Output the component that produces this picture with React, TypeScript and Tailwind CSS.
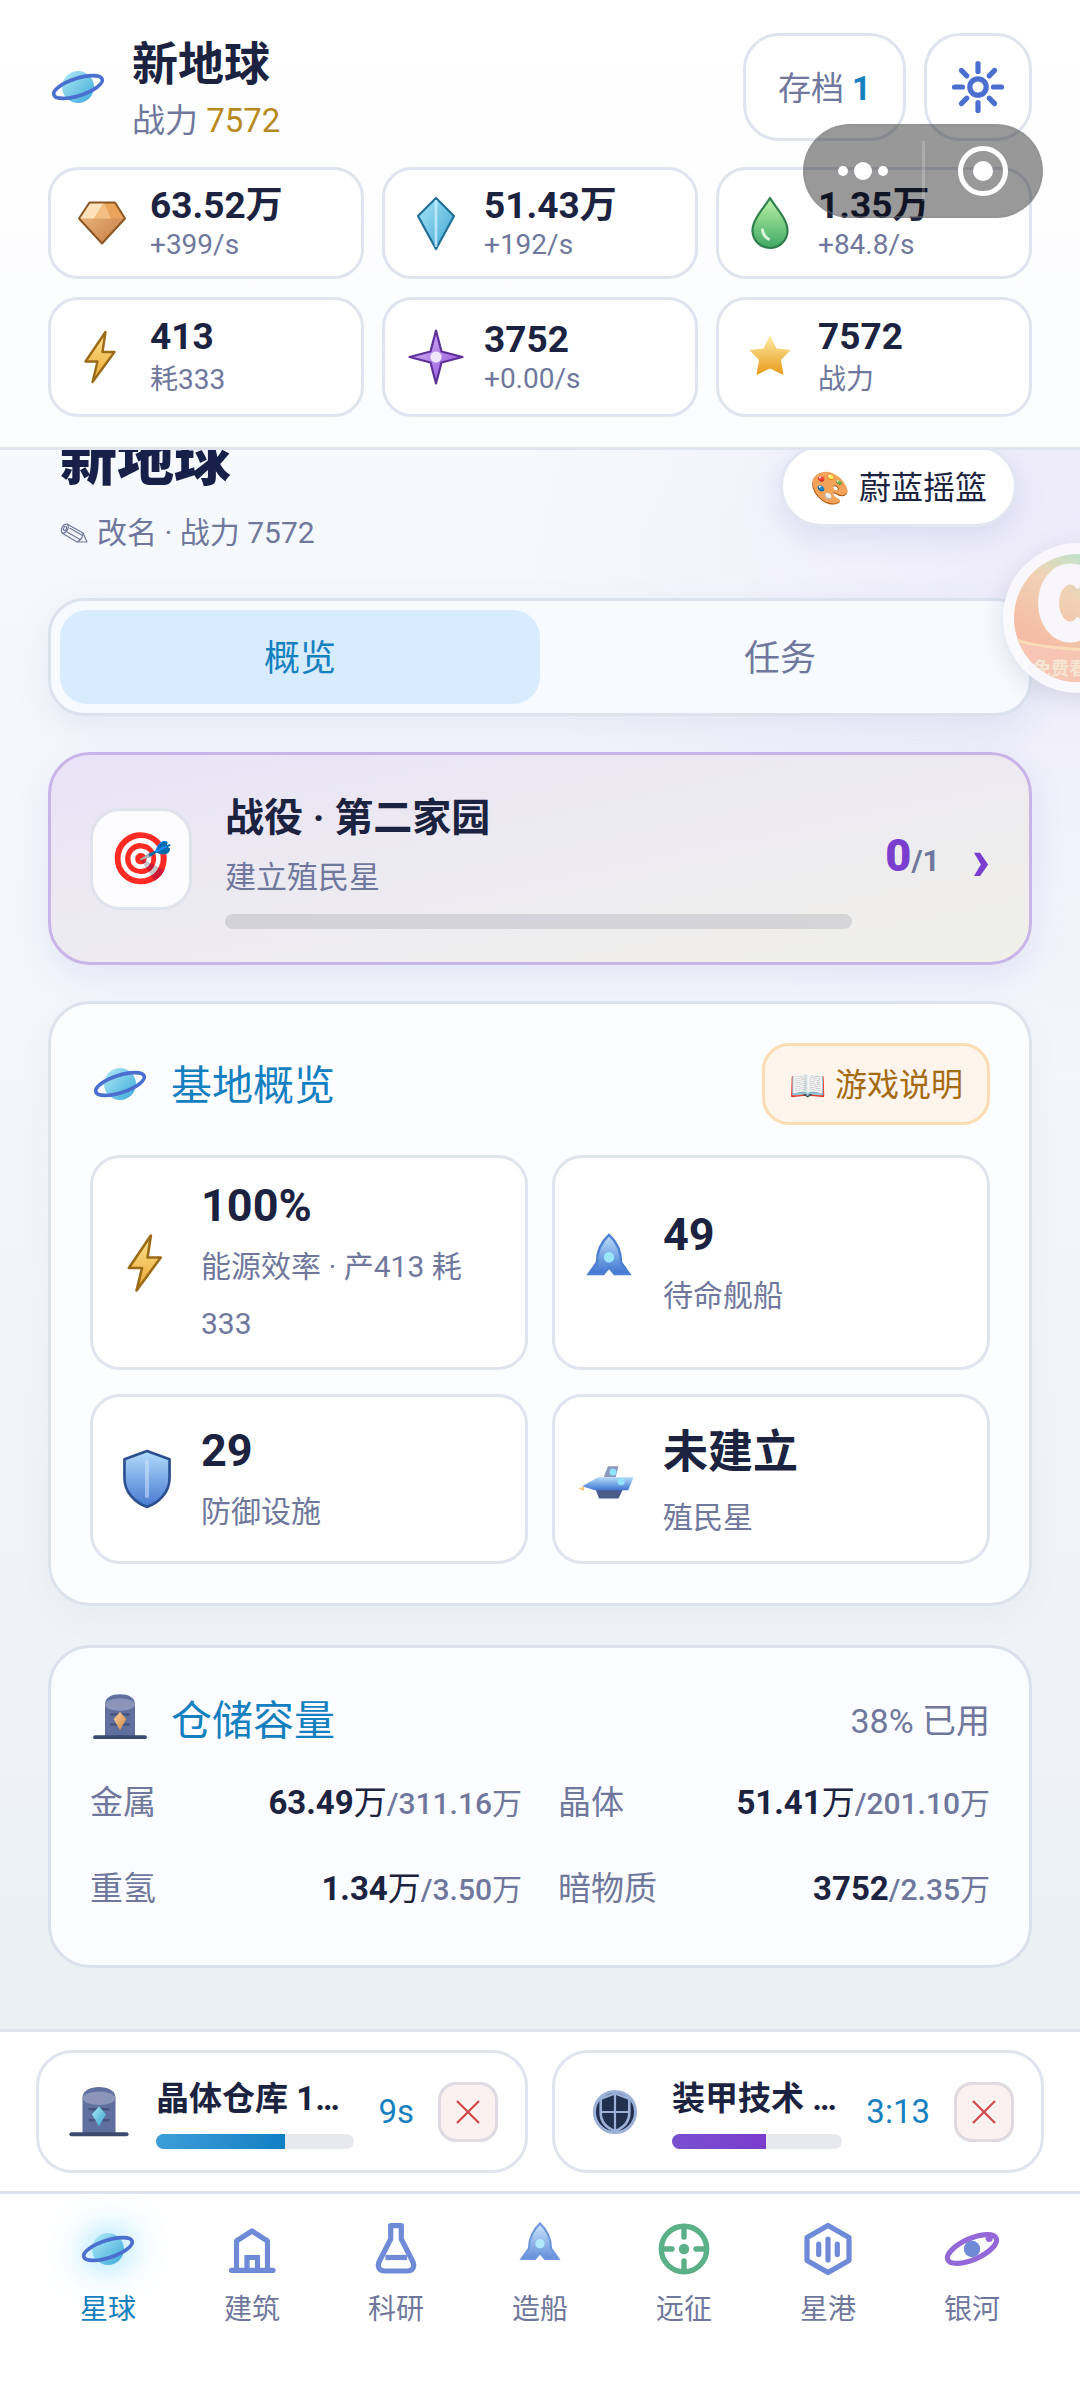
import { useState } from 'react'
import type { ReactNode } from 'react'
import clsx from 'clsx'

interface IconProps {
  className?: string
}

interface Resource {
  icon: ReactNode
  value: string
  note: string
  tall?: boolean
}

interface QueueJob {
  id: string
  icon: ReactNode
  name: string
  remaining: string
  progress: number
  barClass: string
}

// All icons share a 60 unit box
function PlanetIcon({ className }: IconProps) {
  return (
    <svg viewBox="0 0 60 60" className={className} fill="none" aria-hidden="true">
      <defs>
        <linearGradient id="planet" x1="0" y1="0" x2="1" y2="1">
          <stop offset="0" stopColor="#b4ebf6" />
          <stop offset="1" stopColor="#3aa9da" />
        </linearGradient>
      </defs>
      <circle cx="30" cy="30" r="16" fill="url(#planet)" />
      <ellipse cx="30" cy="30" rx="25.4" ry="8.6" stroke="#4a6fcf" strokeWidth="3.6" transform="rotate(-18 30 30)" />
    </svg>
  )
}

function MetalIcon({ className }: IconProps) {
  return (
    <svg viewBox="0 0 60 60" className={className} aria-hidden="true">
      <defs>
        <linearGradient id="metal" x1="0" y1="0" x2="1" y2="1">
          <stop offset="0" stopColor="#f5c08a" />
          <stop offset="1" stopColor="#c47a42" />
        </linearGradient>
      </defs>
      <path d="M17.5 9.5H43L53 25.5L30 50.5L7 25.5Z" fill="url(#metal)" />
      <path d="M17.5 9.5H43L53 25.5H7Z" fill="#eaa45c" />
      <path d="M17.5 9.5H32L22 25.5H7Z" fill="#fde2bb" />
      <path d="M32 9.5L22 25.5H39Z" fill="#f3bf85" />
      <path d="M17.5 9.5H43L53 25.5L30 50.5L7 25.5Z" fill="none" stroke="#8c5622" strokeWidth="2" strokeLinejoin="round" />
    </svg>
  )
}

function CrystalIcon({ className }: IconProps) {
  return (
    <svg viewBox="0 0 60 60" className={className} aria-hidden="true">
      <defs>
        <linearGradient id="crystal" x1="0" y1="0" x2="1" y2="1">
          <stop offset="0" stopColor="#a9e6f8" />
          <stop offset="1" stopColor="#3fa5d3" />
        </linearGradient>
      </defs>
      <path d="M30 5L48 23L30 56L12 23Z" fill="url(#crystal)" stroke="#1f7096" strokeWidth="2.2" strokeLinejoin="round" />
      <path d="M30 7V54" stroke="#d8f4fd" strokeWidth="2.6" opacity="0.7" />
    </svg>
  )
}

function DropIcon({ className }: IconProps) {
  return (
    <svg viewBox="0 0 60 60" className={className} aria-hidden="true">
      <defs>
        <linearGradient id="drop" x1="0" y1="0" x2="0" y2="1">
          <stop offset="0" stopColor="#bff3a8" />
          <stop offset="1" stopColor="#3fa964" />
        </linearGradient>
      </defs>
      <path
        d="M30 5C36 15 47.5 26 47.5 37.5A17.5 17.5 0 0 1 12.5 37.5C12.5 26 24 15 30 5Z"
        fill="url(#drop)"
        stroke="#2f7f4c"
        strokeWidth="2.2"
        strokeLinejoin="round"
      />
      <path d="M22.5 37C23 42 25.5 44.5 28.5 46" fill="none" stroke="#dcf8dc" strokeWidth="3" strokeLinecap="round" />
    </svg>
  )
}

function BoltIcon({ className }: IconProps) {
  return (
    <svg viewBox="0 0 60 60" className={className} aria-hidden="true">
      <defs>
        <linearGradient id="bolt" x1="0" y1="0" x2="0" y2="1">
          <stop offset="0" stopColor="#fbe596" />
          <stop offset="1" stopColor="#eda62d" />
        </linearGradient>
      </defs>
      <path
        d="M33.5 5L13.5 34.5H25.5L20.5 55L42.5 25H30.5Z"
        fill="url(#bolt)"
        stroke="#9c6b18"
        strokeWidth="2.4"
        strokeLinejoin="round"
      />
    </svg>
  )
}

function DarkMatterIcon({ className }: IconProps) {
  return (
    <svg viewBox="0 0 60 60" className={className} aria-hidden="true">
      <defs>
        <linearGradient id="dark" x1="0" y1="0" x2="1" y2="1">
          <stop offset="0" stopColor="#dcc0f8" />
          <stop offset="1" stopColor="#8a48d8" />
        </linearGradient>
      </defs>
      <path
        d="M30 3.5L35.5 24.5L56.5 30L35.5 35.5L30 56.5L24.5 35.5L3.5 30L24.5 24.5Z"
        fill="url(#dark)"
        stroke="#5d3198"
        strokeWidth="2.2"
        strokeLinejoin="round"
      />
      <circle cx="30" cy="30" r="5.6" fill="#f1e6fb" />
    </svg>
  )
}

function StarIcon({ className }: IconProps) {
  return (
    <svg viewBox="0 0 60 60" className={className} aria-hidden="true">
      <defs>
        <linearGradient id="star" x1="0" y1="0" x2="0" y2="1">
          <stop offset="0" stopColor="#fdeea6" />
          <stop offset="1" stopColor="#e89a1c" />
        </linearGradient>
      </defs>
      <path d="M30 8L36.5 21.5L50.7 23L41 33L43.5 48L30 41.5L16.5 48L19 33L9.3 23L23.5 21.5Z" fill="url(#star)" />
    </svg>
  )
}

function SettingsIcon({ className }: IconProps) {
  return (
    <svg viewBox="0 0 60 60" className={className} fill="none" stroke="#4a6fcf" strokeWidth="5.2" strokeLinecap="round" aria-hidden="true">
      <circle cx="30" cy="30" r="8.2" />
      <path d="M30 6.5V14.5M30 45.5V53.5M6.5 30H14.5M45.5 30H53.5M13.4 13.4L18.8 18.8M41.2 41.2L46.6 46.6M46.6 13.4L41.2 18.8M18.8 41.2L13.4 46.6" />
    </svg>
  )
}

function ShieldIcon({ className }: IconProps) {
  return (
    <svg viewBox="0 0 60 60" className={className} aria-hidden="true">
      <defs>
        <linearGradient id="shield" x1="0" y1="0" x2="0" y2="1">
          <stop offset="0" stopColor="#b3dcfb" />
          <stop offset="1" stopColor="#4678d2" />
        </linearGradient>
      </defs>
      <path
        d="M30 4.5L50.5 12V29C50.5 42 41 51.5 30 55.5C19 51.5 9.5 42 9.5 29V12Z"
        fill="url(#shield)"
        stroke="#2c4f8f"
        strokeWidth="2.4"
        strokeLinejoin="round"
      />
      <path d="M30 13V47" stroke="#d5e8fc" strokeWidth="3.6" opacity="0.5" />
    </svg>
  )
}

function RocketIcon({ className }: IconProps) {
  return (
    <svg viewBox="0 0 60 60" className={className} aria-hidden="true">
      <defs>
        <linearGradient id="rocket" x1="0" y1="0" x2="0" y2="1">
          <stop offset="0" stopColor="#bde0fa" />
          <stop offset="1" stopColor="#3f74d0" />
        </linearGradient>
      </defs>
      <path
        d="M30 4.5C36 10 41 19 41 29.5L48.5 40H35L30 34L25 40H11.5L19 29.5C19 19 24 10 30 4.5Z"
        fill="url(#rocket)"
        stroke="#4a7fd2"
        strokeWidth="2.2"
      />
      <circle cx="30" cy="24.8" r="4.7" fill="#9be6fb" />
    </svg>
  )
}

function ColonyShipIcon({ className }: IconProps) {
  return (
    <svg viewBox="0 0 60 60" className={className} aria-hidden="true">
      <defs>
        <linearGradient id="hull" x1="0" y1="0" x2="0" y2="1">
          <stop offset="0" stopColor="#b5dcfa" />
          <stop offset="1" stopColor="#3f74d0" />
        </linearGradient>
      </defs>
      <path d="M25.2 28.5L29 18.3H38.6L36.1 28.5Z" fill="#8d97bb" />
      <path d="M18 40H42.4L38.6 47.7H21Z" fill="#4a5b8c" />
      <path d="M5.5 36.5L20 28.3H52.4L47.4 40.2H17.4Z" fill="url(#hull)" />
      <path d="M2.3 38.7L7.3 36.9V41Z" fill="#f8c878" />
      <circle cx="33.6" cy="23.6" r="3.2" fill="#8fe3fb" />
      <circle cx="41" cy="32.3" r="3.3" fill="#8fe3fb" />
    </svg>
  )
}

function WarehouseIcon({ className, ore }: IconProps & { ore: 'metal' | 'crystal' }) {
  const id = `ore-${ore}`
  return (
    <svg viewBox="0 0 60 60" className={className} aria-hidden="true">
      <defs>
        <linearGradient id={id} x1="0" y1="0" x2="1" y2="1">
          <stop offset="0" stopColor={ore === 'metal' ? '#fbd3a0' : '#a8ecfa'} />
          <stop offset="1" stopColor={ore === 'metal' ? '#cf8440' : '#35a0c8'} />
        </linearGradient>
      </defs>
      <path d="M15 50V17C15 10.5 22 7.3 30 7.3S45 10.5 45 17V50Z" fill="#5f6f9f" />
      <ellipse cx="30" cy="17.5" rx="15" ry="6.2" fill="#8b95ba" />
      <path d="M20.5 27.5H39.5M20.5 37.5H39.5" stroke="#46547e" strokeWidth="2.4" />
      <path d="M30 25L36.4 32L30 43L23.6 32Z" fill={`url(#${id})`} />
      <path d="M5 50.2H55" stroke="#3c4a70" strokeWidth="3.8" strokeLinecap="round" />
    </svg>
  )
}

function ArmorIcon({ className }: IconProps) {
  return (
    <svg viewBox="0 0 60 60" className={className} fill="none" stroke="#9cb1d8" aria-hidden="true">
      <circle cx="30" cy="30" r="18.7" fill="#22304f" strokeWidth="2.8" />
      <path d="M30 13L43 18V31C43 39 37.5 44.5 30 47.5C22.5 44.5 17 39 17 31V18Z" strokeWidth="2.4" />
      <path d="M30 13V47M17 30H43" strokeWidth="2" />
    </svg>
  )
}

function BuildIcon({ className }: IconProps) {
  return (
    <svg viewBox="0 0 60 60" className={className} fill="none" stroke="#6f8bd8" strokeWidth="5.2" strokeLinecap="round" strokeLinejoin="round" aria-hidden="true">
      <path d="M14.5 51V22L30 12L45.5 22V51M9.5 51.3H51" />
      <path d="M25 51V38.5H35.5V51" strokeLinejoin="miter" />
    </svg>
  )
}

function FlaskIcon({ className }: IconProps) {
  return (
    <svg viewBox="0 0 60 60" className={className} fill="none" stroke="#6f8bd8" strokeWidth="5.2" strokeLinejoin="round" aria-hidden="true">
      <path d="M24.7 6.7H35.3V20L46.5 42C49.5 48 46.5 52 41.5 52H18.5C13.5 52 10.5 48 13.5 42L24.7 20Z" />
      <path d="M19.5 38.5H41" />
    </svg>
  )
}

function ExpeditionIcon({ className }: IconProps) {
  return (
    <svg viewBox="0 0 60 60" className={className} fill="none" stroke="#5cb088" strokeWidth="5.4" strokeLinecap="round" aria-hidden="true">
      <circle cx="30" cy="30" r="22.7" />
      <path d="M30 10V18M30 42V50M10 30H18M42 30H50" />
      <circle cx="30" cy="30" r="5.2" fill="#5cb088" stroke="none" />
    </svg>
  )
}

function StarportIcon({ className }: IconProps) {
  return (
    <svg viewBox="0 0 60 60" className={className} fill="none" stroke="#6f8bd8" strokeWidth="5.2" strokeLinecap="round" aria-hidden="true">
      <path d="M30 6.5L51 18.5V41.5L30 53.5L9 41.5V18.5Z" strokeLinejoin="round" />
      <path d="M20.7 25V35.5M30 20V41M39.3 25V35.5" />
    </svg>
  )
}

function GalaxyIcon({ className }: IconProps) {
  return (
    <svg viewBox="0 0 60 60" className={className} fill="none" aria-hidden="true">
      <ellipse cx="30" cy="30" rx="26.5" ry="10.5" stroke="#9468d8" strokeWidth="5.2" transform="rotate(-24 30 30)" />
      <circle cx="30" cy="30" r="8.2" fill="#6f8bd8" />
      <circle cx="47.2" cy="19.3" r="3.6" fill="#9468d8" />
    </svg>
  )
}

function PencilIcon({ className }: IconProps) {
  return (
    <svg viewBox="0 0 28 22" className={className} fill="none" stroke="currentColor" strokeWidth="1.2" strokeLinejoin="round" aria-hidden="true">
      <path d="M7 2L23 11L27 20L17 20L2 11C0 7 3 2 7 2Z" />
      <path d="M7 2C10 4 7 12 2 11M23 11C23 14 21 18 17 20M9.5 6L22.5 13.5M7 10L20 17.5" />
      <ellipse cx="5" cy="6.5" rx="1.4" ry="2.2" transform="rotate(25 5 6.5)" />
    </svg>
  )
}

const RESOURCES: Resource[] = [
  { icon: <MetalIcon className="size-[60px] shrink-0" />, value: '63.52万', note: '+399/s' },
  { icon: <CrystalIcon className="size-[60px] shrink-0" />, value: '51.43万', note: '+192/s' },
  { icon: <DropIcon className="size-[60px] shrink-0" />, value: '1.35万', note: '+84.8/s' },
  { icon: <BoltIcon className="size-[60px] shrink-0" />, value: '413', note: '耗333', tall: true },
  { icon: <DarkMatterIcon className="size-[60px] shrink-0" />, value: '3752', note: '+0.00/s' },
  { icon: <StarIcon className="size-[60px] shrink-0" />, value: '7572', note: '战力', tall: true },
]

const STATS: Resource[] = [
  { icon: <BoltIcon className="size-[66px] shrink-0" />, value: '100%', note: '能源效率 · 产413 耗333' },
  { icon: <RocketIcon className="size-[66px] shrink-0" />, value: '49', note: '待命舰船' },
  { icon: <ShieldIcon className="size-[66px] shrink-0" />, value: '29', note: '防御设施' },
  { icon: <ColonyShipIcon className="size-[66px] shrink-0" />, value: '未建立', note: '殖民星', tall: true },
]

const STORAGE = [
  { name: '金属', used: '63.49', unit: '万', cap: '311.16' },
  { name: '晶体', used: '51.41', unit: '万', cap: '201.10' },
  { name: '重氢', used: '1.34', unit: '万', cap: '3.50' },
  { name: '暗物质', used: '3752', unit: '', cap: '2.35' },
]

const JOBS: QueueJob[] = [
  {
    id: 'warehouse',
    icon: <WarehouseIcon ore="crystal" className="size-[66px] shrink-0" />,
    name: '晶体仓库 1…',
    remaining: '9s',
    progress: 65,
    barClass: 'bg-linear-to-r from-[#3d9fd8] to-[#0f7fc4]',
  },
  {
    id: 'armor',
    icon: <ArmorIcon className="size-[66px] shrink-0" />,
    name: '装甲技术 …',
    remaining: '3:13',
    progress: 55,
    barClass: 'bg-linear-to-r from-[#7a50cf] to-[#7a3ccd]',
  },
]

const NAV = [
  { label: '星球', icon: <PlanetIcon className="size-[60px] drop-shadow-[0_0_18px_rgba(90,205,255,0.9)]" /> },
  { label: '建筑', icon: <BuildIcon className="size-[60px]" /> },
  { label: '科研', icon: <FlaskIcon className="size-[60px]" /> },
  { label: '造船', icon: <RocketIcon className="size-[60px] opacity-80" /> },
  { label: '远征', icon: <ExpeditionIcon className="size-[60px]" /> },
  { label: '星港', icon: <StarportIcon className="size-[60px]" /> },
  { label: '银河', icon: <GalaxyIcon className="size-[60px]" /> },
]

function ResourceCard({ icon, value, note, tall }: Resource) {
  return (
    <div className="flex min-h-[112px] items-center gap-[18px] rounded-[30px] border-[3px] border-[#e0e4ef] bg-white px-[21px] py-3">
      {icon}
      <div className={clsx('min-w-0', tall ? 'pt-1' : 'pt-[2px]')}>
        <div className="text-[37px] leading-[42px] font-bold text-[#1b2340]">{value}</div>
        <div className={clsx('text-[28px] text-[#6f789c]', tall ? 'leading-[44px]' : 'leading-[36px]')}>{note}</div>
      </div>
    </div>
  )
}

function StatCard({ icon, value, note, tall }: Resource) {
  return (
    <div className="flex items-center gap-[21px] rounded-[30px] border-[3px] border-[#e0e4ee] bg-white px-[21px] py-[15px]">
      {icon}
      <div className="min-w-0">
        <div className={clsx('text-[45px] font-bold text-[#1b2340]', tall ? 'pt-1 leading-[73px]' : 'leading-[65px]')}>{value}</div>
        <div className="text-[30px] leading-[57px] text-[#6f789c]">{note}</div>
      </div>
    </div>
  )
}

function Header() {
  return (
    <header className="relative border-b-[3px] border-[#e0e4ef] bg-linear-to-b from-white to-[#fbfcfe] px-12 py-[30px]">
      <div className="flex items-center">
        <PlanetIcon className="size-[60px] shrink-0" />
        <div className="ml-6 flex-1">
          <div className="text-[46px] leading-[68px] font-bold text-[#1b2340]">新地球</div>
          <div className="text-[33px] leading-[46px] text-[#6f789c]">
            战力 <span className="text-[#b88a1e]">7572</span>
          </div>
        </div>
        <div className="flex gap-[18px]">
          <button className="h-[108px] rounded-[36px] border-[3px] border-[#e0e4ef] bg-white px-8 pt-1 text-[33px] text-[#6f789c]">
            存档 <span className="font-bold text-[#1580bf]">1</span>
          </button>
          <button aria-label="设置" className="flex size-[108px] items-center justify-center rounded-[36px] border-[3px] border-[#e0e4ef] bg-white">
            <SettingsIcon className="size-[60px]" />
          </button>
        </div>
      </div>
      <div className="mt-[23px] grid grid-cols-3 gap-[18px]">
        {RESOURCES.map((r) => (
          <ResourceCard key={r.note} {...r} />
        ))}
      </div>
    </header>
  )
}

// Host app capsule, floats over the header
function Capsule() {
  return (
    <div className="absolute top-[124px] right-[37px] z-20 flex h-[94px] w-[240px] items-center rounded-full border-2 border-[#8b8b8b]/40 bg-black/40">
      <button aria-label="更多" className="flex flex-1 items-center justify-center gap-[6px]">
        <span className="size-[10px] rounded-full bg-white" />
        <span className="size-[18px] rounded-full bg-white" />
        <span className="size-[10px] rounded-full bg-white" />
      </button>
      <span className="h-[60px] w-[3px] bg-white/20" />
      <button aria-label="关闭" className="flex flex-1 items-center justify-center">
        <span className="flex size-[50px] items-center justify-center rounded-full border-[5px] border-white">
          <span className="size-[20px] rounded-full bg-white" />
        </span>
      </button>
    </div>
  )
}

function PromoBubble() {
  return (
    <button className="absolute top-[543px] -right-[73px] z-20 flex size-[150px] items-center justify-center rounded-full bg-[#faf9fd]/85 shadow-[0_6px_24px_rgba(60,60,100,0.15)]">
      <span className="relative size-[128px] overflow-hidden rounded-full">
        <svg viewBox="0 0 128 128" className="size-full" fill="none" aria-hidden="true">
          <defs>
            <linearGradient id="promo" x1="0.1" y1="0.6" x2="0.5" y2="0">
              <stop offset="0" stopColor="#f5bda5" />
              <stop offset="0.6" stopColor="#f0d3b5" />
              <stop offset="1" stopColor="#bfe3cb" />
            </linearGradient>
          </defs>
          <rect width="128" height="128" fill="url(#promo)" />
          <path d="M0 85Q34 98 128 96V128H0Z" fill="#f6c5b4" />
          <path d="M0 85Q34 98 128 96" stroke="#f9dcb8" strokeWidth="3" />
          <path d="M72 29.500A21.500 29 0 1 0 72 68.500" stroke="#f8f6fb" strokeWidth="21" />
        </svg>
        <span className="absolute top-[102px] left-[19px] text-[18px] leading-[26px] font-bold whitespace-nowrap text-[#f5e6d3]">免费看</span>
      </span>
    </button>
  )
}

function Hero() {
  return (
    <section className="-mt-[22px] flex justify-between pr-[15px] pl-3">
      <div>
        <h1 className="text-[57px] leading-[66px] font-black text-[#162048]">新地球</h1>
        <button className="mt-[14px] flex items-center gap-[9px] text-[30px] leading-[50px] text-[#6f789c]">
          <PencilIcon className="h-[22px] w-[28px]" />
          改名 · 战力 7572
        </button>
      </div>
      <button className="mt-[17px] flex h-[82px] items-center gap-[9px] self-start rounded-full border-[3px] border-[#e2e6f1] bg-white px-[27px] pt-1 text-[32px] text-[#1b2340] shadow-[0_9px_30px_rgba(80,100,170,0.15)]">
        <span>🎨</span>
        蔚蓝摇篮
      </button>
    </section>
  )
}

function Tabs() {
  const [active, setActive] = useState('概览')
  return (
    <div role="tablist" className="mt-10 flex rounded-[36px] border-[3px] border-[#dbe2ee] bg-[#f7faff] p-[9px] shadow-[0_12px_36px_rgba(70,95,160,0.10)]">
      {['概览', '任务'].map((tab) => (
        <button
          key={tab}
          role="tab"
          aria-selected={tab === active}
          onClick={() => setActive(tab)}
          className={clsx(
            'flex-1 rounded-[27px] pt-[22px] pb-[18px] text-[36px] leading-[54px]',
            tab === active ? 'bg-[#d8ecff] text-[#1580bf]' : 'text-[#6f789c]',
          )}
        >
          {tab}
        </button>
      ))}
    </div>
  )
}

function CampaignCard() {
  return (
    <button className="mt-9 flex w-full items-center rounded-[42px] border-[3px] border-[#c8b5e8] bg-linear-to-br from-[#e8e3f6] via-[#edebf1] to-[#f0f0e9] px-[39px] py-[33px] text-left shadow-[0_12px_36px_rgba(70,95,190,0.10)]">
      <span className="flex size-[102px] shrink-0 items-center justify-center rounded-[30px] border-[3px] border-[#e0e2ee] bg-[#fcfcfe] text-[51px] leading-none">
        🎯
      </span>
      <span className="ml-[33px] block min-w-0 flex-1">
        <span className="block text-[39px] leading-[60px] font-bold text-[#1b2340]">战役 · 第二家园</span>
        <span className="block pt-[2px] text-[31px] leading-[56px] text-[#6f789c]">建立殖民星</span>
        <span className="mt-2 block h-[15px] rounded-full bg-[#1b2340]/12" />
      </span>
      <span className="ml-[33px] text-[45px] leading-[60px] font-black text-[#7a3fcf]">
        0<span className="text-[30px] font-bold text-[#6f789c]">/1</span>
      </span>
      <span className="ml-8 text-[60px] leading-[60px] font-black text-[#7a3fcf]">›</span>
    </button>
  )
}

function BaseOverview() {
  return (
    <section className="mt-9 rounded-[42px] border-[3px] border-[#dde2ed] bg-[#fcfdff] p-[39px] shadow-[0_12px_36px_rgba(70,95,160,0.04)]">
      <div className="flex items-center">
        <PlanetIcon className="size-[60px]" />
        <h2 className="ml-[21px] flex-1 pt-1 text-[41px] leading-[60px] text-[#1580bf]">基地概览</h2>
        <button className="flex h-[82px] items-center gap-[9px] rounded-[27px] border-[3px] border-[#fbdcb3] bg-[#fdf5ec] px-[24px] pt-[2px] text-[32px] text-[#a66b12]">
          <span className="text-[30px]">📖</span>
          游戏说明
        </button>
      </div>
      <div className="mt-[30px] grid grid-cols-2 gap-6">
        {STATS.map((s) => (
          <StatCard key={s.note} {...s} />
        ))}
      </div>
    </section>
  )
}

function StoragePanel() {
  return (
    <section className="mt-[39px] rounded-[42px] border-[3px] border-[#dae1ec] bg-[#fbfcff] p-[39px]">
      <div className="flex items-start">
        <WarehouseIcon ore="metal" className="size-[60px]" />
        <h2 className="ml-[21px] flex-1 pt-1 text-[41px] leading-[60px] text-[#1580bf]">仓储容量</h2>
        <span className="pt-1 text-[34px] leading-[60px] text-[#6f789c]">38% 已用</span>
      </div>
      <dl className="mt-4 grid grid-cols-2 gap-x-9 gap-y-[13px]">
        {STORAGE.map((s) => (
          <div key={s.name} className="flex items-baseline justify-between leading-[72px]">
            <dt className="text-[33px] text-[#6f789c]">{s.name}</dt>
            <dd className="text-[33px] text-[#1b2340]">
              <span className="font-bold">{s.used}</span>
              {s.unit}
              <span className="text-[30px] text-[#6f789c]">
                <span className="font-medium">/{s.cap}</span>万
              </span>
            </dd>
          </div>
        ))}
      </dl>
    </section>
  )
}

function BuildQueue() {
  return (
    <div className="grid grid-cols-2 gap-6 border-t-[3px] border-[#dfe4ee] bg-white px-9 py-[18px]">
      {JOBS.map((job) => (
        <div key={job.id} className="flex items-center gap-6 rounded-[36px] border-[3px] border-[#e0e4ef] bg-white px-[27px] py-[21px]">
          {job.icon}
          <div className="min-w-0 flex-1">
            <div className="truncate text-[33px] leading-[50px] font-bold text-[#1b2340]">{job.name}</div>
            <div className="mt-[10px] h-[15px] overflow-hidden rounded-full bg-[#e8e9ef]">
              <div className={clsx('h-full', job.barClass)} style={{ width: `${job.progress}%` }} />
            </div>
          </div>
          <span className="text-[33px] text-[#1580bf]">{job.remaining}</span>
          <button aria-label="取消" className="flex size-[60px] shrink-0 items-center justify-center rounded-[18px] border-[3px] border-[#dfd9e2] bg-[#fcf1f1]">
            <svg viewBox="0 0 24 24" className="size-[24px]" fill="none" stroke="#d04848" strokeWidth="2.2" aria-hidden="true">
              <path d="M1 1L23 23M23 1L1 23" />
            </svg>
          </button>
        </div>
      ))}
    </div>
  )
}

function BottomNav() {
  return (
    <nav className="flex border-t-[3px] border-[#dde2ee] bg-white px-9 pt-[25px] pb-[57px]">
      {NAV.map((item, i) => (
        <a
          key={item.label}
          href="#"
          className={clsx('flex flex-1 flex-col items-center text-[28px] leading-[42px]', i === 0 ? 'text-[#1580bf]' : 'text-[#6f789c]')}
        >
          {item.icon}
          <span className="mt-[10px]">{item.label}</span>
        </a>
      ))}
    </nav>
  )
}

export default function App() {
  return (
    <div
      lang="zh-CN"
      className="relative flex min-h-screen flex-col overflow-hidden bg-linear-to-b from-[#f9fbff] via-[#f2f5fb] to-[#e6eff1] font-['Roboto','Noto_Sans_CJK_SC',sans-serif]"
    >
      <Header />
      <Capsule />
      <PromoBubble />
      <main className="flex-1 overflow-hidden bg-[radial-gradient(circle_at_100%_4%,rgba(215,195,240,0.25),transparent_30%)] px-12 pb-[61px]">
        <Hero />
        <Tabs />
        <CampaignCard />
        <BaseOverview />
        <StoragePanel />
      </main>
      <BuildQueue />
      <BottomNav />
    </div>
  )
}
